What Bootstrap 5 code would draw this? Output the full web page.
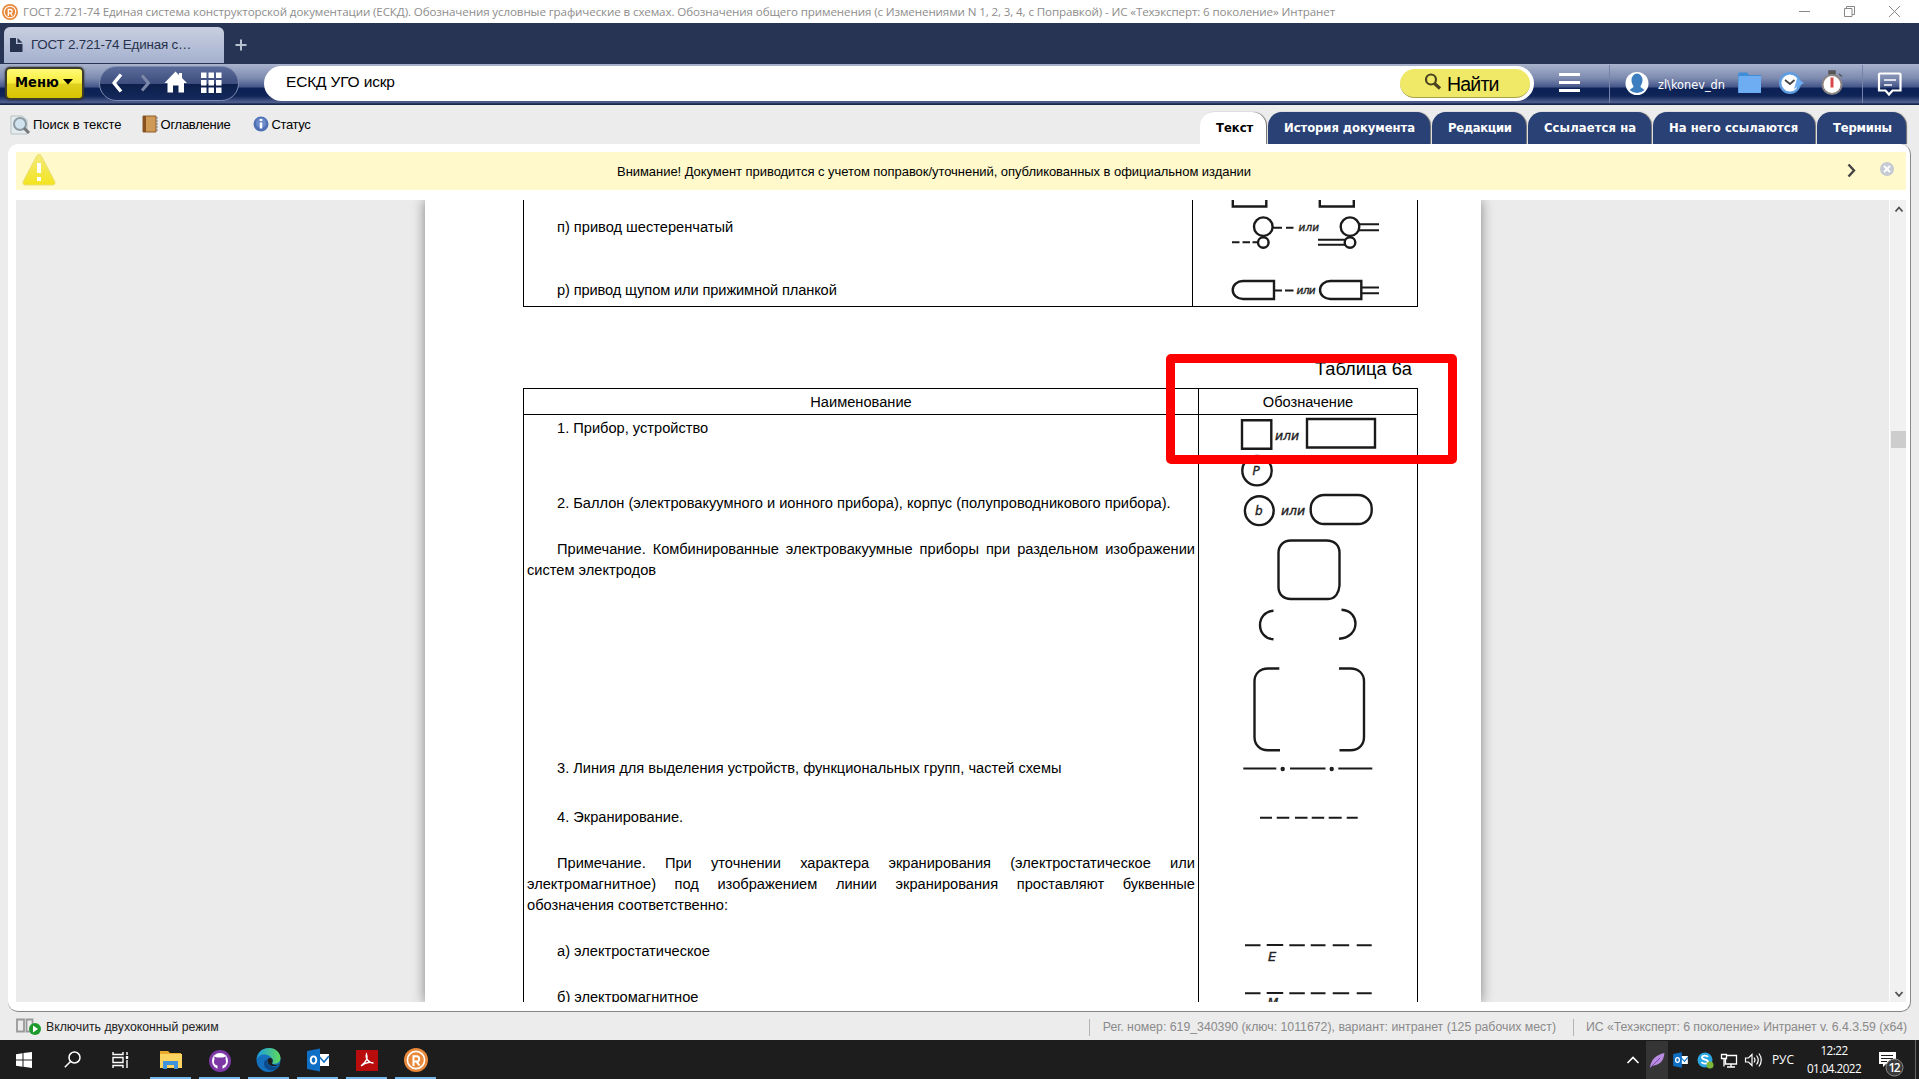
<!DOCTYPE html>
<html lang="ru">
<head>
<meta charset="utf-8">
<title>ГОСТ 2.721-74</title>
<link href="https://cdn.jsdelivr.net/npm/bootstrap@5.3.0/dist/css/bootstrap.min.css" rel="stylesheet">
<style>
body{width:1919px;height:1079px;overflow:hidden;font-family:"Liberation Sans",Arial,sans-serif;font-size:13px;line-height:16px;color:#000;background:#ececec}
svg{display:block;flex:none}
.ft{white-space:nowrap;flex:none;display:block}
.titlebar{height:23px;background:#fff;color:#8d8d8d;font:11.6px/22px "Open Sans","Noto Sans",sans-serif;padding-left:2px}
.f-title{letter-spacing:-.115px;padding-left:5px}
.win-ctl{margin-right:19px;gap:34px}
.tabstrip{height:41px;background:#273454}
.doc-tab{margin:4px 0 0 4px;width:220px;height:36px;border-radius:6px 6px 0 0;background:linear-gradient(#c8cfdf,#a4b0cf);padding:0 0 1px 6px;font-size:13.4px;color:#27324e}
.f-dtab{letter-spacing:-.2px}
.new-tab{margin:15px 0 0 9px}
.toolbar{height:41px;padding-bottom:3px;background:linear-gradient(#a9b3cd 0,#7c8aaf 35%,#47588b 55%,#0b2156 60%,#0f2557 78%,#4b5b8b 92%,#4b5b8b 95%,#17264b 97%)}
.menu-btn{margin-left:5px;width:79px;height:33px;border:2px solid #3c3c2c;border-radius:5px;background:linear-gradient(#fffb75 0,#f7ec3c 48%,#dfcf1e 52%,#d8c400 100%);font:bold 14.6px/16px "DejaVu Sans Condensed","DejaVu Sans",sans-serif;box-shadow:0 0 2px #222;padding:0 0 3px 8px}
.nav-pill{margin-left:15px;width:140px;height:35px;border-radius:18px;border:1px solid #7e8bb0;background:linear-gradient(#5b6b99 0,#3d4e7f 50%,#0c1f4c 53%,#152a5c 100%)}
.search-pill{margin-left:25px;width:1270px;height:35px;border-radius:18px;background:#fff;padding:0 4px 0 22px;font-size:15.5px}
.f-q{letter-spacing:-.16px;padding-bottom:2px}
.find-btn{width:130px;height:29px;border-radius:15px;background:#f0e968;border-bottom:1px solid #a9a34a;font-size:19.5px;line-height:24px;padding:2px 0 0 24px}
.f-find{letter-spacing:-.8px;padding-left:5px}
.tool-end{align-self:flex-start;margin-left:-1px}
.cmdbar{height:39px}
.cmd-links{padding:0 0 0 10px}
.f-c1{margin-left:1px}.f-c2{letter-spacing:-.27px;width:70px}.f-c3{letter-spacing:-.4px}
.view-tabs{padding-right:13px;gap:2px}
.view-tab{height:32px;border-radius:14px 14px 0 0;background:#2a4176;color:#fff;font:bold 12.9px/26px "DejaVu Sans Condensed","DejaVu Sans",sans-serif;box-shadow:1px 0 1px #6b6b6b;padding:3px 0 0 16px}
.view-tab.on{background:#fff;color:#000}
.t1{width:66px}.t2{width:162px;letter-spacing:-.05px}.t3{width:94px;letter-spacing:-.35px}.t4{width:123px;letter-spacing:.1px}.t5{width:162px;letter-spacing:.05px}.t6{width:89px;letter-spacing:-.2px}
.panel{margin:0 8px;height:868px;background:#fff;border-radius:10px;border-right:1px solid #8a8a8a;border-bottom:1px solid #858585;padding:8px 4px 9px 8px}
.warn{height:38px;background:#fff9cb;margin-bottom:10px;flex:none}
.f-warn{letter-spacing:-.049px;padding:1px 28px 0 0}
.viewer{height:802px;background:#ebebeb;overflow:hidden;position:relative}
.sheet{margin-left:409px;width:1056px;background:#fff;box-shadow:0 0 12px rgba(0,0,0,.45);padding-left:98px;font-size:14.64px;line-height:21px}
.sheet p{margin:0;text-indent:30px;text-align:justify}
.tbl{width:895px;border:1px solid #000;display:grid}
.tbl-a{grid-template-columns:668px 1px 224px;border-top:0;height:107px}
.tbl-b{grid-template-columns:674px 1px 218px;grid-template-rows:26px 588px;height:615px}
.vline{background:#000}
.head-cell{border-bottom:1px solid #000;text-align:center;line-height:26px;height:26px}
.txt-cell{padding:0 3px}
.caption-6a{font-size:18.3px;line-height:22px;height:81px;padding:51px 6px 0 0;width:895px;text-align:right}
.tight{letter-spacing:-.12px}
.tbl-a .p1{padding-top:17px}.tbl-a .p2{padding-top:42px}
.tbl-b .p1{padding-top:3px}.tbl-b .p2{padding-top:54px}.tbl-b .p3{padding-top:25px}.tbl-b .p4{padding-top:177px}.tbl-b .p5{padding-top:28px}.tbl-b .p6{padding-top:25px}.tbl-b .p7{padding-top:25px}
.scroller{position:absolute;right:-1px;top:0;width:18px;height:802px;background:#f1f1f1;border-left:1px solid #fff}
.thumb{width:16px;height:17px;margin-top:214px;background:#cdcdcd}
.red-frame{position:absolute;left:1166px;top:354px;width:291px;height:110px;border:9px solid #f00;border-radius:5px}
.statusbar{height:28px;color:#8a8a8a;font-size:12.3px;padding:2px 12px 0 16px}
.statusbar .sep{width:1px;height:17px;background:#b4b4b4}
.f-s1{letter-spacing:-.02px;color:#222}.f-s2{margin:0 17px 0 13px}.f-s3{margin-left:12px;letter-spacing:-.05px}
.taskbar{height:39px;background:#1d1d1d;color:#fff;font:12px/18px "Open Sans","Noto Sans",sans-serif}
.tb-item{width:48px;height:39px;flex:none}
.tb-app{width:49px;height:39px;flex:none;padding:2px 4px 0}
.first-app{margin-left:2px}
.tb-app::after{content:"";height:2px;width:41px;background:#76b9ed}
.f-lang{margin:0 13px 0 4px;line-height:40px;letter-spacing:-.1px;width:22px}
.clock{width:54px;margin-right:13px;padding-top:1px;font-size:11.7px;letter-spacing:-.55px}
.fig{fill:none;stroke:#1a1a1a;stroke-width:2.4}
.fig text{fill:#222;stroke:#222;stroke-width:.35;font-style:italic;font-family:"DejaVu Sans","Liberation Sans",sans-serif}
.dash-l{stroke-width:2}
</style>
<script src="https://cdn.jsdelivr.net/npm/bootstrap@5.3.0/dist/js/bootstrap.bundle.min.js"></script>
</head>
<body>
<svg width="0" height="0" class="position-absolute"><defs>
<linearGradient id="gw" x1="0" y1="0" x2="0" y2="1"><stop offset="0" stop-color="#f4ea7d"/><stop offset="1" stop-color="#f3e41d"/></linearGradient>
<linearGradient id="ge" x1="0" y1="0" x2="1" y2="0"><stop offset="0" stop-color="#1b9de2"/><stop offset="1" stop-color="#5fd95a"/></linearGradient>
<symbol id="rlogo" viewBox="0 0 24 24"><circle cx="12" cy="12" r="12" fill="#e8883a"/><circle cx="12" cy="12" r="8.600" fill="none" stroke="#fff" stroke-width="1.600"/><path d="M9.500 18V8.200h3a2.700 2.700 0 0 1 0 5.400H9.500M12.500 13.600L15.500 17.500" fill="none" stroke="#fff" stroke-width="2"/></symbol>
<symbol id="outl" viewBox="0 0 24 24"><path d="M13 6h10v12H13z" fill="#fff"/><path d="M13.500 9l4.500 5L23 8" fill="none" stroke="#0f6fc5" stroke-width="1.600"/><path d="M1 3l13-2.500v23L1 21z" fill="#0f6fc5"/><ellipse cx="7.500" cy="12" rx="2.800" ry="3.600" fill="none" stroke="#fff" stroke-width="1.900"/></symbol>
</defs></svg>
<div class="d-flex flex-column">
<header class="titlebar d-flex align-items-center">
<svg width="16" height="16"><use href="#rlogo"/></svg>
<span class="ft f-title">ГОСТ 2.721-74 Единая система конструкторской документации (ЕСКД). Обозначения условные графические в схемах. Обозначения общего применения (с Изменениями N 1, 2, 3, 4, с Поправкой) - ИС «Техэксперт: 6 поколение» Интранет</span>
<div class="win-ctl d-flex ms-auto">
<svg width="11" height="11" fill="none" stroke="#888"><path d="M0 5.500h11"/></svg>
<svg width="11" height="11" fill="none" stroke="#888"><path d="M.5 2.500h7.500v8H.5zM2.500 2.500v-2h8v8H8"/></svg>
<svg width="11" height="11" fill="none" stroke="#888"><path d="M0 0l11 11M11 0L0 11"/></svg>
</div>
</header>
<div class="tabstrip d-flex">
<div class="doc-tab d-flex align-items-center">
<svg width="13" height="14" fill="#27324e"><path d="M0 0h6v6h6.500v8H0z"/><path d="M7.500 0l5 4.800h-5z"/></svg>
<span class="ft f-dtab ps-2">ГОСТ 2.721-74 Единая с…</span>
</div>
<svg class="new-tab" width="16" height="14" stroke="#b9c0d0" stroke-width="2"><path d="M8 1.500v11M2.500 7h11"/></svg>
</div>
<div class="toolbar d-flex align-items-center">
<div class="menu-btn d-flex align-items-center"><span class="ft">Меню</span><svg class="ms-1" width="10" height="6"><path d="M0 0h10L5 5.500z"/></svg></div>
<div class="nav-pill">
<svg width="138" height="33" fill="none" stroke-linejoin="round"><path d="M21 7.500l-7 8.500 7 8.500" stroke="#fff" stroke-width="3.500"/><path d="M42 8.500l6.500 7.500-6.500 7.500" stroke="#7c88a8" stroke-width="3"/><path d="M64.500 16L75.500 4.500l3.500 3.600V6h3v5l5 5h-3v9.500h-5.500v-7h-5.500v7H67.500V16z" fill="#fff"/><g fill="#fff"><path d="M101 5.500h5.500V11H101zM108.500 5.500h5.500V11h-5.500zM116 5.500h5.500V11H116zM101 13h5.500v5.500H101zM108.500 13h5.500v5.500h-5.500zM116 13h5.500v5.500H116zM101 20.500h5.500V26H101zM108.500 20.500h5.500V26h-5.500zM116 20.500h5.500V26H116z"/></g></svg>
</div>
<div class="search-pill d-flex align-items-center justify-content-between"><span class="ft f-q">ЕСКД УГО искр</span>
<div class="find-btn d-flex align-items-center"><svg width="18" height="22" fill="none" stroke="#4a431f"><circle cx="7" cy="6.500" r="5" stroke-width="2.200"/><path d="M10.500 10.500l5.500 5" stroke-width="3.200"/></svg><span class="ft f-find">Найти</span></div></div>
<svg class="tool-end" width="386" height="41" viewBox="1533 64 386 41" fill="none">
<path d="M1559 74.500h21M1559 82.500h21M1559 90.500h21" stroke="#fff" stroke-width="3"/>
<path d="M1609.500 65v38M1862.500 65v38" stroke="#7583aa"/>
<circle cx="1637" cy="83.500" r="11.500" fill="#fff"/><path d="M1631.500 80a5.500 6.500 0 0 1 11 0c0 4-2 5-2 7l4 3a11 11 0 0 1-15 0l4-3c0-2-2-3-2-7z" fill="#3d7ec0"/>
<text x="1658" y="88.500" font-family="DejaVu Sans Condensed, DejaVu Sans, sans-serif" font-size="12" fill="#fff" textLength="67" lengthAdjust="spacingAndGlyphs">zl\konev_dn</text>
<path d="M1738 74l1-1.500h8l2 2.500h12v18h-23z" fill="#3f8dd6"/><path d="M1738.500 76h22.500v17h-22.500z" fill="#6fadf2"/>
<circle cx="1790" cy="83" r="9.800" fill="#fff" stroke="#5f9de0" stroke-width="2.400"/><path d="M1794 89l10-6-7-4.500z" fill="#6fadf2"/><path d="M1785 80l5 4 4.500-4" stroke="#444" stroke-width="1.800"/>
<path d="M1829 71h6v3h-6zM1839 74l3 2.500" stroke="#555" fill="#555" stroke-width="1.500"/><circle cx="1832" cy="84.500" r="9.500" fill="#fff" stroke="#8d8585" stroke-width="2"/><path d="M1832 77.500v10" stroke="#d94848" stroke-width="3"/>
<path d="M1880 73.500h19.500a1 1 0 0 1 1 1v16h-8l-3.500 4-3.500-4h-6.500v-16a1 1 0 0 1 1-1z" stroke="#fff" stroke-width="2.200"/><path d="M1884 80h12M1884 85h8" stroke="#fff" stroke-width="1.600"/>
</svg>
</div>
<div class="cmdbar d-flex">
<div class="cmd-links d-flex align-items-center">
<svg width="22" height="20"><path d="M1 1h11l5 4v14H1z" fill="#e4ecee" stroke="#b6c3c6"/><circle cx="10" cy="9" r="6" fill="#cfe3ee" stroke="#8d9aa3" stroke-width="2"/><path d="M14 13l5 5" stroke="#777" stroke-width="3"/></svg>
<span class="ft f-c1">Поиск в тексте</span>
<svg width="39" height="20"><path d="M21 1h13v16H21z" fill="#cf9a55" stroke="#8b5c2c"/><path d="M21 1h3v16h-3z" fill="#87521f"/><path d="M35 2v15" stroke="#777" stroke-dasharray="2 1"/></svg>
<span class="ft f-c2">Оглавление</span>
<svg width="41" height="18"><circle cx="30" cy="8" r="7.500" fill="#5070b4"/><circle cx="30" cy="7" r="5" fill="#6d8ccb"/><path d="M30 6.500v6M30 3v2" stroke="#fff" stroke-width="2.500"/></svg>
<span class="ft f-c3">Статус</span>
</div>
<nav class="view-tabs d-flex align-items-end ms-auto">
<div class="view-tab on t1"><span class="ft">Текст</span></div>
<div class="view-tab t2"><span class="ft">История документа</span></div>
<div class="view-tab t3"><span class="ft">Редакции</span></div>
<div class="view-tab t4"><span class="ft">Ссылается на</span></div>
<div class="view-tab t5"><span class="ft">На него ссылаются</span></div>
<div class="view-tab t6"><span class="ft">Термины</span></div>
</nav>
</div>
<main class="panel">
<div class="warn d-flex align-items-center">
<svg width="44" height="38"><path d="M23 2.500c1 0 2 .6 2.600 2L38.500 29c1.200 2.500.3 4-2 4h-27c-2.300 0-3.200-1.500-2-4L20.400 4.500c.6-1.400 1.600-2 2.600-2z" fill="url(#gw)" stroke="#e9de70"/><path d="M23 11v10M23 25v4" stroke="#fff" stroke-width="4"/></svg>
<span class="ft f-warn mx-auto">Внимание! Документ приводится с учетом поправок/уточнений, опубликованных в официальном издании</span>
<svg width="70" height="38" fill="none"><path d="M12.500 12.500l5.500 6-5.500 6" stroke="#444" stroke-width="2.400"/><circle cx="51" cy="17" r="7" fill="#c6cad2"/><path d="M48 14l6 6M54 14l-6 6" stroke="#fff" stroke-width="2"/></svg>
</div>
<div class="viewer">
<div class="sheet">
<div class="tbl tbl-a">
<div class="txt-cell"><p class="p1">п) привод шестеренчатый</p><p class="p2 tight">р) привод щупом или прижимной планкой</p></div>
<div class="vline"></div>
<svg class="fig" width="224" height="106" viewBox="1193 200 224 106">
<path d="M1232.800 200v6.500h33.500V200M1319.800 200v6.500h34V200"/>
<circle cx="1263.300" cy="226.700" r="9.300"/><circle cx="1263.300" cy="242.500" r="5.300"/><circle cx="1350" cy="226.700" r="9.300"/><circle cx="1350" cy="242.500" r="5.300"/>
<path class="dash-l" d="M1273 227.700h9M1286 227.700h7.500M1232 242.300h7.500M1242.500 242.300h7.500M1252.500 242.300h5.500M1359 224.300h20M1359 230.300h20M1318 239.800h28M1318 244.700h27"/>
<path d="M1274 281h-31a10.300 9 0 0 0 0 18h31zM1361.300 281h-31a10.300 9 0 0 0 0 18h31z"/>
<path class="dash-l" d="M1274 290.500h8M1285 290.500h8.500M1361 287.500h18M1361 293.300h18"/>
<text x="1298.500" y="230.700" font-size="10.500" textLength="20.500">или</text><text x="1296.500" y="293.700" font-size="10.500" textLength="19">или</text>
</svg>
</div>
<div class="caption-6a">Таблица 6а</div>
<div class="tbl tbl-b">
<div class="head-cell">Наименование</div><div class="vline"></div><div class="head-cell">Обозначение</div>
<div class="txt-cell">
<p class="p1">1. Прибор, устройство</p>
<p class="p2">2. Баллон (электровакуумного и ионного прибора), корпус (полупроводникового прибора).</p>
<p class="p3">Примечание. Комбинированные электровакуумные приборы при раздельном изображении систем электродов</p>
<p class="p4">3. Линия для выделения устройств, функциональных групп, частей схемы</p>
<p class="p5">4. Экранирование.</p>
<p class="p6">Примечание. При уточнении характера экранирования (электростатическое или электромагнитное) под изображением линии экранирования проставляют буквенные обозначения соответственно:</p>
<p class="p7">а) электростатическое</p>
<p class="p7">б) электромагнитное</p>
</div>
<div class="vline"></div>
<svg class="fig" width="218" height="587" viewBox="1199 415 218 587">
<path d="M1242 420.200h29.300v28.500H1242zM1307 419h68v28.500h-68z"/>
<circle cx="1257" cy="470.700" r="14.700"/><circle cx="1259.300" cy="510.700" r="14.400"/>
<rect x="1310.700" y="495" width="61" height="29" rx="13.500"/>
<path d="M1291 540.500h35.500c8 0 13 5 13 12v33c-.5 7-4 13.500-11.500 13.500h-37c-8 0-12.500-5-12.500-12v-34c0-7 4.500-12.500 12.500-12.500z"/>
<path d="M1273.500 610.700c-18 1-18 27.500 0 28.500M1341.500 609.700c19 1 19 28-2.500 29"/>
<path d="M1279.300 668.500H1268c-8 0-13.500 5-13.500 13V737c0 8 5.500 13.300 13.500 13.300h12M1339 668.500h11.500c8 0 13.500 5 13.500 13V737c0 8-5.500 13.300-13.500 13.300H1339.500"/>
<path class="dash-l" d="M1243.300 768.500h33M1290 768.500h35.500M1338.300 768.500h34"/><circle cx="1282.700" cy="769" r="1"/><circle cx="1331.700" cy="769" r="1"/>
<path class="dash-l" d="M1260 817.700h12M1276.700 817.700h12.600M1295 817.700h12.500M1311.700 817.700h12.500M1328.700 817.700h13M1346.700 817.700h11"/>
<path id="shield" class="dash-l" d="M1245 945.200h15.500M1266.700 945h16.500M1289.300 945.200h15.500M1310.700 945.200h14.800M1332.700 945.200h16.500M1356.700 945.300h15"/>
<use href="#shield" y="48"/>
<text x="1275" y="439.700" font-size="12.500" textLength="24">или</text><text x="1281" y="515" font-size="12.500" textLength="24">или</text>
<text x="1252.500" y="474.500" font-size="12">P</text><text x="1255" y="515" font-size="12">b</text><text x="1268" y="961" font-size="13">E</text><text x="1267.500" y="1007" font-size="12.500">M</text>
</svg>
</div>
</div>
<div class="scroller d-flex flex-column align-items-center">
<svg width="16" height="17" fill="none" stroke="#505050" stroke-width="1.800"><path d="M4.500 11.500l3.500-4 3.500 4"/></svg>
<div class="thumb mb-auto"></div>
<svg width="16" height="17" fill="none" stroke="#505050" stroke-width="1.800"><path d="M4.500 7l3.500 4 3.500-4"/></svg>
</div>
</div>
</main>
<footer class="statusbar d-flex align-items-center">
<svg width="30" height="20" fill="none"><path d="M1 2.500h7v12H1zM10.500 2.500h6v12h-6z" stroke="#999" stroke-width="1.800"/><circle cx="19" cy="12" r="6" fill="#1c9a2c"/><path d="M17 8.500l5 3.500-5 3.500z" fill="#fff"/></svg>
<span class="ft f-s1">Включить двухоконный режим</span>
<div class="sep ms-auto"></div><span class="ft f-s2">Рег. номер: 619_340390 (ключ: 1011672), вариант: интранет (125 рабочих мест)</span>
<div class="sep"></div><span class="ft f-s3">ИС «Техэксперт: 6 поколение» Интранет v. 6.4.3.59 (x64)</span>
</footer>
<footer class="taskbar d-flex">
<div class="tb-item d-flex align-items-center justify-content-center"><svg width="16" height="16" fill="#fff"><path d="M0 2.200l6.500-.9v6.200H0zM7.500 1.100L16 0v7.500H7.500zM0 8.500h6.500v6.200L0 13.800zM7.500 8.500H16V16l-8.500-1.200z"/></svg></div>
<div class="tb-item d-flex align-items-center justify-content-center"><svg width="17" height="17" fill="none" stroke="#fff" stroke-width="1.500"><circle cx="10.500" cy="6.500" r="5.500"/><path d="M6.500 10.500L.8 16.200"/></svg></div>
<div class="tb-item d-flex align-items-center justify-content-center"><svg width="17" height="16" fill="none" stroke="#fff" stroke-width="1.400"><path d="M1 0v2.500h10V0M1 5.500h10v5H1zM1 16v-2.500h10V16M15 0v3M15 8v8"/><path d="M13.800 4h2.400v3h-2.400z" fill="#fff" stroke="none"/></svg></div>
<div class="tb-app first-app d-flex flex-column align-items-center justify-content-between"><svg class="mt-2" width="24" height="20"><path d="M1 1h8l2 2h11v15H1z" fill="#e9a92c"/><path d="M1 4h22v14H1z" fill="#fcd462"/><path d="M4 19v-8h15v8h-4v-4H8v4z" fill="#3f93dc"/></svg></div>
<div class="tb-app d-flex flex-column align-items-center justify-content-between"><svg class="mt-2" width="22" height="22" viewBox="0 1 22 22"><circle cx="11" cy="12" r="11" fill="#7d38a5"/><circle cx="11" cy="12" r="8" fill="#fff"/><path d="M8.500 20v-3.500c-3.200-.5-4.300-3-3-6l-.2-3 2.700 1h6l2.700-1-.2 3c1.300 3 .2 5.500-3 6V20z" fill="#7d38a5"/></svg></div>
<div class="tb-app d-flex flex-column align-items-center justify-content-between"><svg class="mt-1" width="25" height="27" viewBox="0 -1.500 25 27"><circle cx="12.500" cy="12.500" r="12" fill="#1470bd"/><path d="M.6 12C2-3 23-3 24.500 10c.3 5-4 7-8.500 6 1-1.500 1-3 0-5C12 5 3 6 .6 12z" fill="url(#ge)"/><path d="M11 12c-1 5 4 9 12.500 6.500C20 25 9 24 8 17c-.3-2.500 1-4.500 3-5z" fill="#0c4a8b"/><path d="M11.500 12c1-2 4-2 5 0 .6 1.500 0 3-.8 4 1 1.500 5 2 8 .5-4 3.500-13 3-12.200-4.500z" fill="#1d1d1d"/></svg></div>
<div class="tb-app d-flex flex-column align-items-center justify-content-between"><svg class="mt-1" width="24" height="27" viewBox="0 0 24 27"><use href="#outl" y="2" width="24" height="24"/></svg></div>
<div class="tb-app d-flex flex-column align-items-center justify-content-between"><svg class="mt-2" width="22" height="21"><path d="M0 0h22v21H0z" fill="#b90d0d"/><path d="M5 16c6-5 7-8 5.500-12-1.500 4 2 9 7 9-4-1.500-9 0-12.500 3z" fill="none" stroke="#fff" stroke-width="1.300"/></svg></div>
<div class="tb-app d-flex flex-column align-items-center justify-content-between"><svg class="mt-1" width="24" height="27" viewBox="0 0 24 27"><use href="#rlogo" y="2" width="24" height="24"/></svg></div>
<svg class="ms-auto" width="148" height="39" viewBox="1620 1040 148 39" fill="none">
<path d="M1627.500 1063l5.500-5.500 5.500 5.500" stroke="#fff" stroke-width="1.600"/><path d="M1646 1041h22v38h-22z" fill="#353535"/>
<path d="M1650 1068c1-9 6-13 14.500-15-1 9-5 12-13 13z" fill="#b98be0"/><path d="M1650 1068l10-10" stroke="#7a4bab"/>
<use href="#outl" x="1672" y="1052" width="17" height="16"/>
<circle cx="1705" cy="1060" r="7.500" fill="#2ba6e0"/><path d="M1708 1057c-1-2-6-2-6 .5s6 1.700 6 4.200-5 2.500-6.500.3" stroke="#fff" stroke-width="1.800"/><circle cx="1710" cy="1065" r="3.500" fill="#7db83a"/>
<path d="M1726 1055.500h10.500v8.500h-11v-5M1727 1067h8M1731 1064v3M1721.500 1054.500h5v4h-5zM1724 1058.500v8" stroke="#fff" stroke-width="1.300"/>
<path d="M1745.500 1058h3l3.500-3.500v11l-3.500-3.500h-3zM1754 1057.500q2 2.500 0 5M1756.500 1055.500q3.500 4.500 0 9M1759 1053.500q4.500 6.500 0 13" stroke="#fff" stroke-width="1.200"/>
</svg>
<span class="ft f-lang">РУС</span>
<div class="clock d-flex flex-column align-items-center"><span class="ft">12:22</span><span class="ft">01.04.2022</span></div>
<svg width="45" height="39" viewBox="1874 1040 45 39"><path d="M1879 1052h17v12h-10l-3 3v-3h-4z" fill="#fff"/><path d="M1881 1055.500h12M1881 1058.500h12M1881 1061.500h6" stroke="#1d1d1d"/><circle cx="1894.500" cy="1067.500" r="8.500" fill="#3a3a3a" stroke="#8a8a8a"/><text x="1888.500" y="1072" font-size="12" font-weight="600" fill="#fff" font-family="Open Sans, sans-serif" textLength="12">12</text><path d="M1915.500 1040v39" stroke="#666"/></svg>
</footer>
</div>
<div class="red-frame"></div>
</body>
</html>
